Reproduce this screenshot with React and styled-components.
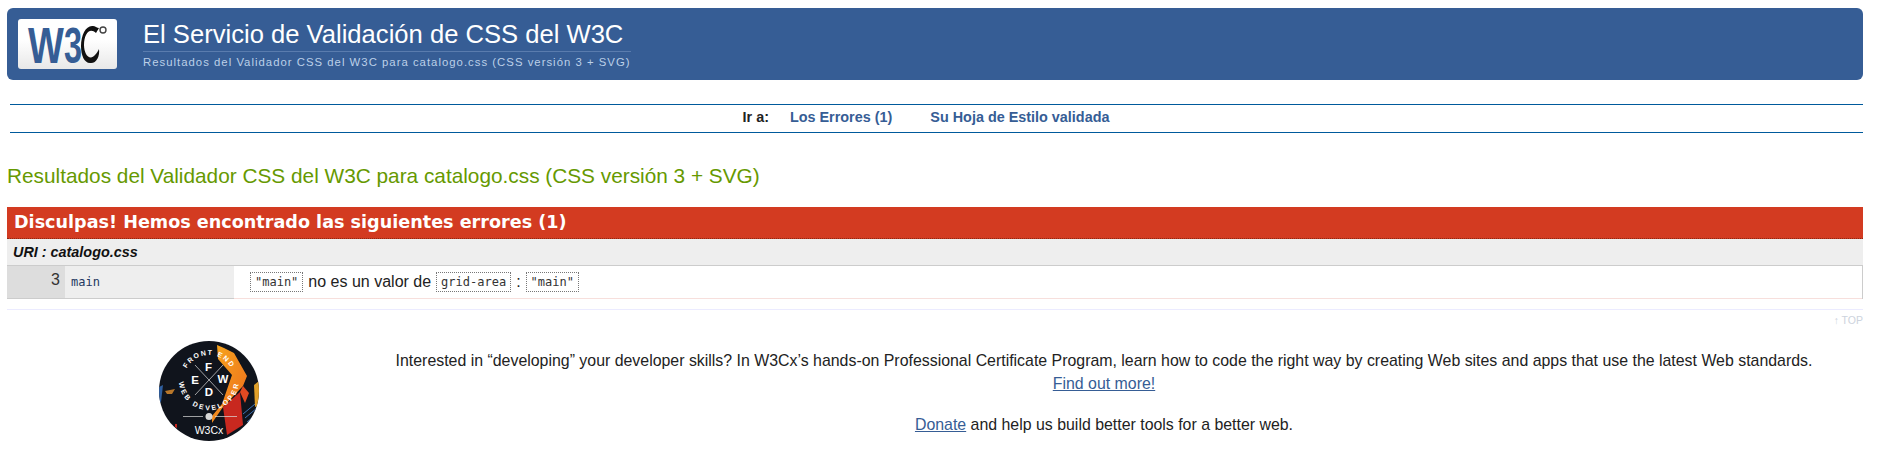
import styled, { createGlobalStyle } from "styled-components";

const GlobalStyle = createGlobalStyle`
  html, body {
    margin: 0;
    padding: 0;
    background: #fff;
    color: #222;
    font-family: "Liberation Sans", Arial, sans-serif;
  }
`;

const Page = styled.div`
  padding: 8px 16px 0 7px;
  height: 448px;
  overflow: hidden;
`;

const Banner = styled.header`
  display: flex;
  align-items: center;
  height: 72px;
  padding-left: 11px;
  background: #365d95;
  border-radius: 6px;
`;

const LogoBox = styled.a`
  display: block;
  width: 99px;
  height: 50px;
  margin-right: 26px;
  border-radius: 3px;
  overflow: hidden;
  background: linear-gradient(#fff 40%, #e8e8e8);
`;

const BannerText = styled.div`
  display: flex;
  flex-direction: column;
  color: #fff;
`;

const Title = styled.h1`
  margin: 0;
  padding-bottom: 2px;
  font-size: 25.6px;
  line-height: 30px;
  font-weight: 400;
  border-bottom: 1px solid #5a7cae;
`;

const Subtitle = styled.p`
  margin: 3px 0 0;
  font-size: 11.33px;
  line-height: 14px;
  letter-spacing: 1.02px;
  color: #bcd0e8;
  white-space: nowrap;
`;

const Jump = styled.nav`
  display: flex;
  justify-content: center;
  align-items: center;
  gap: 38px;
  height: 24px;
  margin: 24px 0 0 3px;
  padding: 0 21px 3px 0;
  border-top: 1px solid #005a9c;
  border-bottom: 1px solid #005a9c;
  font-size: 14.4px;
  font-weight: 700;
`;

const JumpLabel = styled.span`
  margin-right: -17px;
  color: #222;
`;

const JumpLink = styled.a`
  color: #365d95;
`;

const ResultsHeading = styled.h2`
  margin: 30px 0 18px;
  font-size: 20.8px;
  line-height: 26px;
  font-weight: 400;
  color: #669900;
`;

const ErrorBar = styled.h3`
  margin: 0;
  height: 32px;
  padding-left: 7px;
  background: #d33b21;
  border-bottom: 1px dotted #8a2a16;
  box-sizing: border-box;
  color: #fff;
  font-family: "DejaVu Sans", Verdana, sans-serif;
  font-size: 17.6px;
  line-height: 31px;
  font-weight: 700;
`;

const UriRow = styled.div`
  height: 27px;
  padding-left: 6px;
  box-sizing: border-box;
  background: #eee;
  border-bottom: 1px solid #ccc;
  font-size: 14.4px;
  line-height: 26px;
  font-weight: 700;
  font-style: italic;
  color: #111;
`;

const ErrorRow = styled.div`
  display: grid;
  grid-template-columns: 58px 169px 1fr;
  height: 33px;
  box-sizing: border-box;
  border-bottom: 1px solid #f7dfdc;
`;

const LineCell = styled.div`
  padding-right: 5px;
  background: #ddd;
  border-bottom: 1px solid #ccc;
  text-align: right;
  font-size: 16px;
  line-height: 28px;
  color: #333;
`;

const ContextCell = styled.div`
  padding-left: 6px;
  background: #eee;
  border-bottom: 1px solid #ccc;
  font-family: "DejaVu Sans Mono", monospace;
  font-size: 12px;
  line-height: 32px;
  color: #24375f;
`;

const MessageCell = styled.div`
  display: flex;
  align-items: center;
  gap: 5px;
  padding: 0 0 2px 16px;
  border-right: 1px solid #ccc;
  font-size: 16px;
  color: #222;
`;

const Code = styled.code`
  padding: 2px 4px;
  border: 1px dotted #777;
  font-family: "DejaVu Sans Mono", monospace;
  font-size: 12px;
  color: #333;
`;

const Divider = styled.div`
  height: 1px;
  margin-top: 10px;
  background: #ebebff;
`;

const TopLink = styled.a`
  display: block;
  margin-top: 3px;
  text-align: right;
  font-size: 10.5px;
  line-height: 14px;
  color: #cdd3dd;
`;

const Promo = styled.section`
  display: grid;
  grid-template-columns: 338px 1fr;
  margin-top: 8px;
`;

const BadgeSlot = styled.div`
  padding: 6px 0 0 152px;
`;

const PromoText = styled.div`
  padding-top: 15px;
  text-align: center;
  font-size: 15.9px;
  line-height: 22.5px;
  color: #222;
`;

const PromoParagraph = styled.p`
  margin: 0 0 19px;
`;

const PromoLink = styled.a`
  color: #365d95;
  text-decoration: underline;
`;

const W3cLogo = () => (
  <svg width="99" height="50" viewBox="0 0 99 50">
    <g fill="#365d95" fontFamily="Liberation Sans, sans-serif" fontSize="50" fontWeight="700">
      <text transform="translate(10 44) scale(0.76 1)">W</text>
      <text transform="translate(46 44) scale(0.65 1)">3</text>
    </g>
    <path d="M81 9 L78 14 C72 8 66 14 66 26 C66 36 72 42 77 36 C79 34 80 32 81 30 C82 38 78 45 72 44 C66 44 63 36 63 27 C63 16 68 6 75 7 C77 7 79 9 81 9 Z" fill="#111" />
    <circle cx="85" cy="11" r="3" fill="none" stroke="#444" strokeWidth="1.4" />
  </svg>
);

const CourseBadge = () => (
  <svg width="100" height="100" viewBox="0 0 100 100">
    <defs>
      <clipPath id="disc"><circle cx="50" cy="50" r="50" /></clipPath>
      <linearGradient id="flame" x1="0" y1="0" x2="1" y2="1">
        <stop offset="0" stopColor="#f7a81e" />
        <stop offset="1" stopColor="#ec6a1c" />
      </linearGradient>
      <path id="topArc" d="M25 39 A25 25 0 0 1 75 39" />
      <path id="bottomArc" d="M20.3 35 A30 30 0 1 0 79.7 35" />
    </defs>
    <g clipPath="url(#disc)">
      <rect width="100" height="100" fill="#10141c" />
      <path d="M58 4 L65 7 L75 12 L88 35 L84 45 L64 66 L53 82 L53 75 L63 63 L73 34 L59 18 Z" fill="url(#flame)" />
      <path d="M64 66 L81 51 L84 84 L68 94 Z" fill="#c8281f" />
      <path d="M84 45 L90 52 L86 62 L81 51 Z" fill="#e24a22" />
      <path d="M84 73 L96 63 M86 77 L98 67 M88 81 L100 71" stroke="#3f74b5" strokeWidth="1" />
      <path d="M95 44 L100 40 L100 64 L96 66 Z" fill="#e0a02a" />
      <path d="M0 46 L4 44 L2 61 L0 62 Z" fill="#2f5f9f" />
      <path d="M6 50 L16 48 L13 53 L8 53 Z" fill="#b8772a" />
      <path d="M16 83 L18 83 L18 87 L16 86 Z" fill="#c8281f" />
    </g>
    <g stroke="#ddd" strokeWidth="0.7">
      <path d="M36 24 L64 54 M64 24 L36 54" />
      <path d="M24 75.5 H44 M56 75.5 H78" />
    </g>
    <circle cx="50" cy="75.5" r="3.5" fill="#d8d8d8" />
    <g fill="#fff" fontFamily="Liberation Sans, sans-serif" fontWeight="700">
      <text fontSize="7" letterSpacing="1.5"><textPath href="#topArc" startOffset="50%" textAnchor="middle">FRONT END</textPath></text>
      <text fontSize="7" letterSpacing="2.2"><textPath href="#bottomArc" startOffset="50%" textAnchor="middle">WEB DEVELOPER</textPath></text>
      <text x="49.5" y="30" fontSize="11.5" textAnchor="middle">F</text>
      <text x="36" y="43" fontSize="11.5" textAnchor="middle">E</text>
      <text x="64" y="42" fontSize="11.5" textAnchor="middle">W</text>
      <text x="50" y="55" fontSize="11.5" textAnchor="middle">D</text>
      <text x="50" y="93" fontSize="10.5" fontWeight="400" textAnchor="middle">W3Cx</text>
    </g>
  </svg>
);

const App = () => (
  <>
    <GlobalStyle />
    <Page>
      <Banner>
        <LogoBox><W3cLogo /></LogoBox>
        <BannerText>
          <Title>El Servicio de Validación de CSS del W3C</Title>
          <Subtitle>Resultados del Validador CSS del W3C para catalogo.css (CSS versión 3 + SVG)</Subtitle>
        </BannerText>
      </Banner>
      <Jump>
        <JumpLabel>Ir a:</JumpLabel>
        <JumpLink>Los Errores (1)</JumpLink>
        <JumpLink>Su Hoja de Estilo validada</JumpLink>
      </Jump>
      <ResultsHeading>Resultados del Validador CSS del W3C para catalogo.css (CSS versión 3 + SVG)</ResultsHeading>
      <ErrorBar>Disculpas! Hemos encontrado las siguientes errores (1)</ErrorBar>
      <UriRow>URI : catalogo.css</UriRow>
      <ErrorRow>
        <LineCell>3</LineCell>
        <ContextCell>main</ContextCell>
        <MessageCell>
          <Code>"main"</Code> no es un valor de <Code>grid-area</Code> : <Code>"main"</Code>
        </MessageCell>
      </ErrorRow>
      <Divider />
      <TopLink>↑ TOP</TopLink>
      <Promo>
        <BadgeSlot><CourseBadge /></BadgeSlot>
        <PromoText>
          <PromoParagraph>
            Interested in “developing” your developer skills? In W3Cx’s hands-on Professional Certificate Program, learn how to code the right way by creating Web sites and apps that use the latest Web standards.
            <br />
            <PromoLink>Find out more!</PromoLink>
          </PromoParagraph>
          <PromoParagraph>
            <PromoLink>Donate</PromoLink> and help us build better tools for a better web.
          </PromoParagraph>
        </PromoText>
      </Promo>
    </Page>
  </>
);

export default App;
